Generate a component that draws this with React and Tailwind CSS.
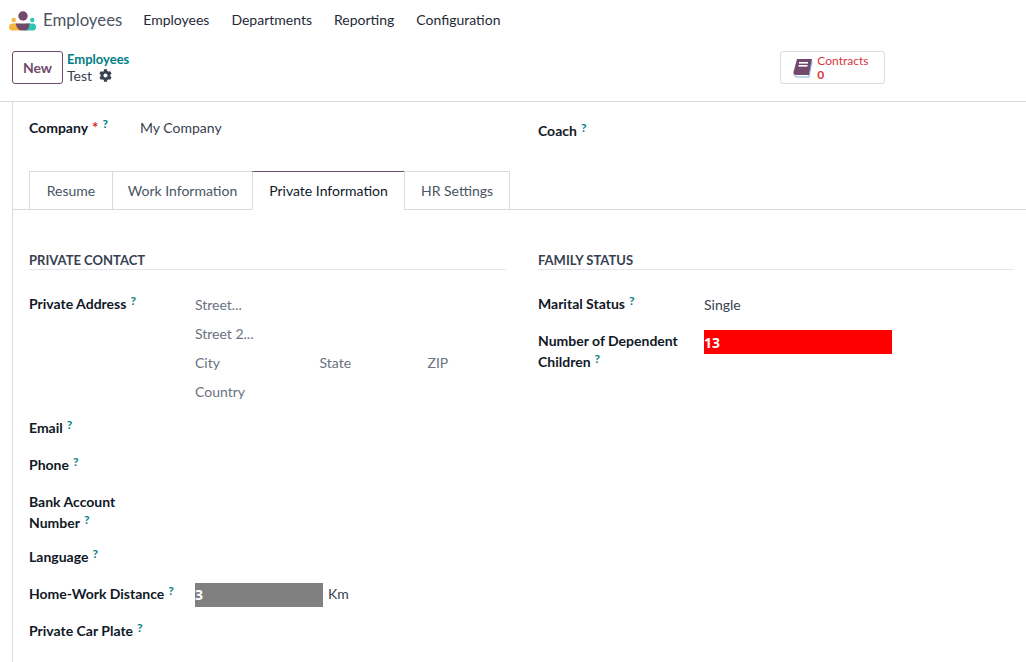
import React from 'react';
import { FaCog } from 'react-icons/fa';

const Help = ({ className = '-top-[4px]' }) => (
  <sup className={`relative ml-[4px] text-[12px] leading-none text-[#017e84] ${className}`}>?</sup>
);

const Label = ({ children, className = '' }) => (
  <div className={`font-bold leading-[21px] text-[#111827] ${className}`}>
    {children}
    <Help />
  </div>
);

const Row = ({ label, height, children }) => (
  <div className={`flex items-center ${height}`}>
    <div className="w-[166px] shrink-0">
      <Label>{label}</Label>
    </div>
    {children}
  </div>
);

const AppLogo = () => (
  <svg width="27" height="20" viewBox="0 0 27 20" className="mt-[2px] shrink-0">
    <circle cx="14" cy="5" r="4.7" fill="#71496b" />
    <circle cx="4.7" cy="9" r="2.2" fill="#f4b942" />
    <circle cx="23.3" cy="9" r="2.2" fill="#2ec4b6" />
    <path d="M3 12.5 H10 L12 19.5 H3 Q0 19.5 0 16 Q0 12.5 3 12.5 Z" fill="#f4b942" />
    <path d="M24 12.5 H17 L16 19.5 H24 Q27 19.5 27 16 Q27 12.5 24 12.5 Z" fill="#2ec4b6" />
    <path d="M6.5 12.5 H20.5 Q20 19.5 16.5 19.5 H12.5 Q8.5 19.5 6.5 12.5 Z" fill="#71496b" />
  </svg>
);

const BookIcon = () => (
  <svg width="22" height="20" viewBox="0 0 22 20">
    <path d="M5 1 H20 L17 17 H4 Q1 17 1.5 14 Z" fill="#71496b" />
    <path d="M2 17 Q3 19 5 19 H17 L20 3" fill="none" stroke="#5b9bd5" strokeWidth="0.8" />
    <rect x="7" y="4" width="9" height="1.6" fill="#fff" />
    <rect x="6.5" y="7" width="9" height="1.6" fill="#fff" />
  </svg>
);

const tabs = [
  { name: 'Resume', width: 'w-[84px]' },
  { name: 'Work Information', width: 'w-[141px]' },
  { name: 'Private Information', width: 'w-[153px]', active: true },
  { name: 'HR Settings', width: 'w-[106px]' },
];

export default function App() {
  return (
    <div className="h-[662px] w-[1026px] overflow-hidden bg-white text-[14px] text-[#374151] [font-family:Lato,sans-serif]">
      {/* top navbar */}
      <nav className="flex h-[39px] items-center pl-[9px] text-[#1f2937]">
        <AppLogo />
        <span className="ml-[7px] mr-[21px] text-[16.8px] text-[#4b5563]">Employees</span>
        <div className="flex gap-[22px]">
          <span>Employees</span>
          <span>Departments</span>
          <span>Reporting</span>
          <span>Configuration</span>
        </div>
      </nav>

      {/* control panel */}
      <div className="flex h-[63px] items-start border-b border-[#d8dadd] pl-[12px] pt-[12px]">
        <button className="h-[33px] w-[51px] rounded-[3px] border border-[#71496b] text-[14px] font-bold text-[#71496b]">
          New
        </button>
        <div className="ml-[4px] leading-[17px]">
          <div className="text-[13px] font-bold text-[#017e84]">Employees</div>
          <div className="-mt-px flex items-center gap-[7px] text-[14px]">
            Test
            <FaCog size={13} className="text-[#374151]" />
          </div>
        </div>
        <div className="ml-[651px] flex h-[33px] w-[105px] items-center rounded-[3px] border border-[#d8dadd] pl-[11px]">
          <BookIcon />
          <div className="ml-[3px] text-[12px] leading-[14px] text-[#d9363e]">
            <div>Contracts</div>
            <div className="font-bold">0</div>
          </div>
        </div>
      </div>

      {/* sheet */}
      <div className="ml-[12px] h-[560px] border-l border-[#d8dadd]">
        <div className="flex pl-[16px] pt-[15px]">
          <div className="flex h-[21px] w-[509px] items-center">
            <div className="w-[111px] shrink-0 font-bold leading-[21px] text-[#111827]">
              Company <span className="ml-[1px] text-[15px] text-[#dc2626]">*</span>
              <Help className="-top-[5px]" />
            </div>
            <span>My Company</span>
          </div>
          <div className="mt-[3px]">
            <Label>Coach</Label>
          </div>
        </div>

        {/* tabs */}
        <div className="mt-[30px] flex h-[39px] border-b border-[#d8dadd] pl-[16px]">
          {tabs.map((tab) => (
            <div
              key={tab.name}
              className={`-ml-px flex h-[39px] items-center justify-center border first:ml-0 ${tab.width} ${
                tab.active
                  ? 'border-[#d8dadd] border-t-[#71496b] border-b-white bg-white text-[#111827]'
                  : 'border-[#d8dadd] text-[#4b5563]'
              }`}
            >
              {tab.name}
            </div>
          ))}
        </div>

        <div className="flex pl-[16px] pt-[41px]">
          {/* left group */}
          <div className="w-[477px]">
            <div className="border-b border-[#e5e7eb] text-[13px] font-bold leading-[18px] text-[#374151]">
              PRIVATE CONTACT
            </div>
            <div className="mt-[20px] flex h-[116px]">
              <div className="w-[166px] shrink-0 pt-[3px]">
                <Label>Private Address</Label>
              </div>
              <div className="grid grid-cols-[124.5px_108px_1fr] grid-rows-[29px_29px_29px_29px] items-center text-[#6b7280]">
                <span className="col-span-3">Street...</span>
                <span className="col-span-3">Street 2...</span>
                <span>City</span>
                <span>State</span>
                <span>ZIP</span>
                <span className="col-span-3">Country</span>
              </div>
            </div>
            <div className="mt-[3px]">
              <Row label="Email" height="h-[37px]" />
              <Row label="Phone" height="h-[37px]" />
              <div className="mt-[8px] w-[120px]">
                <Label>Bank Account Number</Label>
              </div>
              <Row label="Language" height="h-[37px] mt-[5px]" />
              <Row label="Home-Work Distance" height="h-[37px]">
                <div className="mt-[2px] flex h-[24px] w-[128px] items-center bg-[#808080] font-bold text-white [font-family:'Noto_Sans',sans-serif]">3</div>
                <span className="ml-[5px]">Km</span>
              </Row>
              <Row label="Private Car Plate" height="h-[36px]" />
            </div>
          </div>

          {/* right group */}
          <div className="ml-[32px] w-[476px]">
            <div className="border-b border-[#e5e7eb] text-[13px] font-bold leading-[18px] text-[#374151]">
              FAMILY STATUS
            </div>
            <div className="mt-[20px] flex h-[29px] items-center">
              <div className="-mt-[2px] w-[166px] shrink-0">
                <Label>Marital Status</Label>
              </div>
              <span>Single</span>
            </div>
            <div className="mt-[11px] flex items-start">
              <div className="w-[166px] shrink-0 pr-[10px]">
                <Label>Number of Dependent Children</Label>
              </div>
              <div className="flex h-[24px] w-[188px] items-center bg-[#ff0000] font-bold text-white [font-family:'Noto_Sans',sans-serif]">13</div>
            </div>
          </div>
        </div>
      </div>
    </div>
  );
}
